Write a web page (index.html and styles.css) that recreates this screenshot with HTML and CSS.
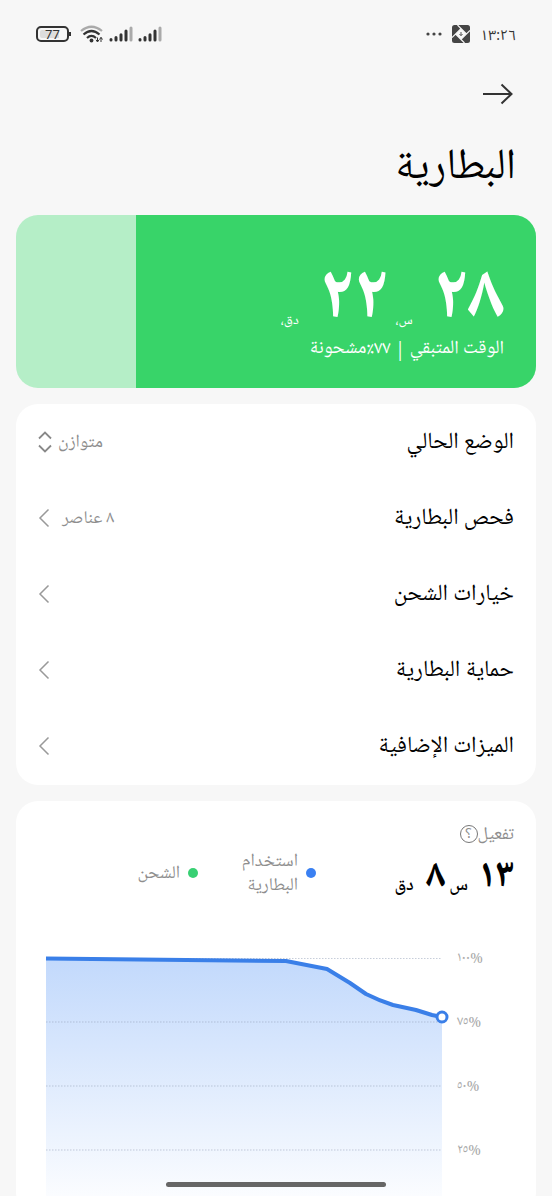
FILE: index.html
```
<!DOCTYPE html>
<html lang="ar" dir="rtl">
<head>
<meta charset="utf-8">
<meta name="viewport" content="width=device-width, initial-scale=1">
<title>البطارية</title>
<link rel="stylesheet" href="styles.css">
</head>
<body>
<div class="screen">
  <header class="status">
    <div class="status-group">
      <time class="clock">١٣:٢٦</time>
      <svg class="app-icon" viewBox="0 0 18 18" aria-hidden="true">
        <rect width="18" height="18" rx="2.5" fill="#454545"/>
        <path d="M9 3.6L14.4 9L9 14.4L3.6 9Z" fill="#f7f7f7"/>
        <path d="M5.500 0L14.4 9M18 5.500L9 14.4M12.500 18L3.6 9M0 12.500L9 3.6" stroke="#f7f7f7" stroke-width="1.2"/>
        <path d="M9 7V10M7.500 9L9 10.800L10.500 9" stroke="#555" stroke-width="1" fill="none"/>
      </svg>
      <svg class="dots" viewBox="0 0 16 4" aria-hidden="true"><g fill="#444"><circle cx="2" cy="2" r="1.6"/><circle cx="8" cy="2" r="1.6"/><circle cx="14" cy="2" r="1.6"/></g></svg>
    </div>
    <div class="status-group status-system">
      <svg class="signal" viewBox="0 0 24 16" aria-hidden="true"><g stroke="#333" stroke-width="3" stroke-linecap="round"><path d="M2 14V13.4M7 14V11.5M12 14V8.7M17 14V5"/><path d="M22 14V2" stroke="#aaa"/></g></svg>
      <svg class="signal" viewBox="0 0 24 16" aria-hidden="true"><g stroke="#333" stroke-width="3" stroke-linecap="round"><path d="M2 14V13.4M7 14V11.5M12 14V8.7M17 14V5"/><path d="M22 14V2" stroke="#aaa"/></g></svg>
      <svg class="wifi" viewBox="0 0 24 18" aria-hidden="true">
        <g fill="none" stroke="#333" stroke-width="2.2"><path d="M1 6Q11.500 -2.500 22 6" stroke="#aaa"/><path d="M3.500 9.500Q11.500 2.500 19.500 9.500"/><path d="M7 13Q11.500 8.800 16 13"/></g>
        <circle cx="11.500" cy="15.500" r="1.900" fill="#333"/>
        <path d="M17.500 12.500V16.500M16 14.800L17.500 17L19 14.800M21 17V12.500M19.500 14.500L21 12.300L22.500 14.500" stroke="#333" fill="none"/>
      </svg>
      <span class="battery"><span class="battery-level">77</span></span>
    </div>
  </header>

  <nav class="topbar">
    <a class="back" href="#" aria-label="رجوع">
      <svg viewBox="0 0 32 22" aria-hidden="true"><path d="M1 11H29M19.500 1.500L29.500 11L19.500 20.500" fill="none" stroke="#333" stroke-width="2"/></svg>
    </a>
  </nav>
  <h1 class="title">البطارية</h1>

  <main class="content">
    <section class="hero">
      <div class="hero-charge" style="width:77%"></div>
      <p class="hero-time"><strong>٢٨</strong><small>س،</small><strong>٢٢</strong><small>دق،</small></p>
      <p class="hero-note">الوقت المتبقي | ٧٧٪مشحونة</p>
    </section>

    <section class="card options">
      <div class="row">
        <label class="row-label" for="mode">الوضع الحالي</label>
        <span class="row-end">
          <select class="mode" id="mode"><option>متوازن</option></select>
          <svg class="updown" viewBox="0 0 14 22" aria-hidden="true"><path d="M1 7.500L7 1.500L13 7.500M1 14.500L7 20.500L13 14.500" fill="none" stroke="#888" stroke-width="1.800"/></svg>
        </span>
      </div>
      <a class="row" href="#"><span class="row-label">فحص البطارية</span><span class="row-end"><span class="count">٨ عناصر</span><svg class="chevron" viewBox="0 0 12 20" aria-hidden="true"><path d="M10.500 1.500L2 10L10.500 18.500"/></svg></span></a>
      <a class="row" href="#"><span class="row-label">خيارات الشحن</span><span class="row-end"><svg class="chevron" viewBox="0 0 12 20" aria-hidden="true"><path d="M10.500 1.500L2 10L10.500 18.500"/></svg></span></a>
      <a class="row" href="#"><span class="row-label">حماية البطارية</span><span class="row-end"><svg class="chevron" viewBox="0 0 12 20" aria-hidden="true"><path d="M10.500 1.500L2 10L10.500 18.500"/></svg></span></a>
      <a class="row" href="#"><span class="row-label">الميزات الإضافية</span><span class="row-end"><svg class="chevron" viewBox="0 0 12 20" aria-hidden="true"><path d="M10.500 1.500L2 10L10.500 18.500"/></svg></span></a>
    </section>

    <section class="card usage">
      <div class="usage-head">
        <span>تفعيل</span><button class="help" type="button" aria-label="مساعدة">؟</button>
      </div>
      <div class="usage-summary">
        <p class="usage-time"><strong>١٣</strong><small>س</small><strong>٨</strong><small>دق</small></p>
        <ul class="legend">
          <li class="legend-use"><i class="dot dot-blue"></i><span>استخدام البطارية</span></li>
          <li><i class="dot dot-green"></i><span>الشحن</span></li>
        </ul>
      </div>
      <div class="chart" dir="ltr">
        <div class="plot">
          <svg class="plot-svg" viewBox="0 0 396 256" preserveAspectRatio="none" role="img" aria-label="مستوى البطارية">
            <defs><linearGradient id="fill" x1="0" y1="0" x2="0" y2="1"><stop offset="0" stop-color="#c2d9fc"/><stop offset="1" stop-color="#ffffff"/></linearGradient></defs>
            <path fill="url(#fill)" d="M0 0.500L240 3L281 11L304 25L320 36Q334 43 347 47L370 52L386 57L396 59V256H0Z"/>
            <path d="M0 0.500H396M0 64H396M0 128H396M0 192H396" stroke="#8f9db5" stroke-opacity="0.500" stroke-dasharray="1.500 1.500" fill="none"/>
            <path d="M0 0.500L240 3L281 11L304 25L320 36Q334 43 347 47L370 52L386 57L396 59" fill="none" stroke="#3a7fe8" stroke-width="4" stroke-linejoin="round"/>
          </svg>
          <span class="marker"></span>
        </div>
        <div class="axis"><span>١٠٠%</span><span>٧٥%</span><span>٥٠%</span><span>٢٥%</span></div>
      </div>
    </section>
  </main>
  <div class="home-bar"></div>
</div>
</body>
</html>
```
FILE: styles.css
```
* { box-sizing: border-box; }
body, h1, p, ul { margin: 0; padding: 0; }
body {
  background: #f7f7f7;
  color: #000;
  font-family: "Noto Naskh Arabic UI", "Noto Naskh Arabic", "Noto Sans Arabic", Roboto, "DejaVu Sans", sans-serif;
}
a { color: inherit; text-decoration: none; }
svg { display: block; flex: none; }
.screen { position: relative; height: 100vh; overflow: hidden; }

.status { display: flex; justify-content: space-between; align-items: center; height: 68px; padding: 0 36px; }
.status-group { display: flex; align-items: center; gap: 10px; }
.status-system { gap: 5px; }
.clock { padding-top: 4px; font-family: "Noto Sans Arabic", "Noto Sans", sans-serif; font-size: 14px; line-height: 24px; color: #333; }
.app-icon { width: 18px; height: 18px; }
.dots { width: 16px; height: 4px; }
.signal { width: 24px; height: 16px; }
.wifi { width: 24px; height: 18px; }
.battery { position: relative; width: 33px; height: 16px; margin-right: 6px; padding: 2px; border: 2px solid #333; border-radius: 5px; }
.battery::after { content: ""; position: absolute; top: 4px; right: -4px; width: 2px; height: 4px; background: #333; }
.battery-level { display: block; background: linear-gradient(90deg, #ddd 77%, transparent 77%); color: #333; font: 13px/8px "Noto Sans", sans-serif; text-align: center; border-radius: 2px; }

.topbar { display: flex; height: 52px; align-items: center; padding: 0 38px; }
.back svg { width: 32px; height: 22px; }
.title { height: 95px; padding: 16px 36px 0; font-size: 43px; line-height: 64px; font-weight: 400; }

.content { display: flex; flex-direction: column; gap: 16px; padding: 0 16px; }
.hero { position: relative; height: 173px; padding: 38px 32px 0; border-radius: 22px; overflow: hidden; background: #b5eec7; color: #fff; }
.hero-charge { position: absolute; inset: 0 0 0 auto; background: #38d469; }
.hero-time { position: relative; display: flex; align-items: flex-end; height: 80px; }
.hero-time strong { font-size: 76px; line-height: 70px; font-weight: 700; }
.hero-time small { font-size: 14px; line-height: 24px; padding: 0 20px 0 8px; }
.hero-note { position: relative; font-size: 19px; line-height: 32px; }

.card { background: #fff; border-radius: 22px; }
.options { padding-bottom: 1px; }
.row { display: flex; justify-content: space-between; align-items: center; height: 76px; padding: 0 22px; }
.row-label { font-size: 23px; line-height: 32px; }
.row-end { display: flex; align-items: center; gap: 12px; color: #8e8e8e; font-size: 18px; }
.mode { appearance: none; border: 0; padding: 0; margin: 0 0 0 -6px; background: none; color: inherit; font: inherit; }
.updown { width: 14px; height: 22px; }
.chevron { width: 12px; height: 20px; fill: none; stroke: #999; stroke-width: 1.5; }

.usage { padding: 20px 22px 0; }
.usage-head { display: flex; align-items: center; height: 26px; font-size: 18px; line-height: 26px; color: #8e8e8e; }
.help { width: 18px; height: 18px; padding: 0; border: 1px solid #777; border-radius: 50%; background: none; color: inherit; font: 14px/16px "Noto Sans Arabic", "DejaVu Sans", sans-serif; }
.usage-summary { display: flex; align-items: center; height: 52px; }
.usage-time { display: flex; align-items: baseline; width: 198px; padding-top: 8px; }
.usage-time strong { font-size: 40px; line-height: 48px; }
.usage-time small { font-size: 18px; line-height: 24px; font-weight: 600; padding: 0 12px 0 4px; }
.legend { display: flex; align-items: center; gap: 40px; list-style: none; color: #8e8e8e; font-size: 18px; line-height: 24px; }
.legend li { display: flex; align-items: center; gap: 8px; }
.legend-use span { width: 60px; }
.dot { flex: none; width: 10px; height: 10px; border-radius: 50%; }
.dot-blue { background: #3a80f2; }
.dot-green { background: #38d073; }
.chart { display: flex; gap: 15px; margin-top: 59px; padding-left: 8px; }
.plot { position: relative; flex: 1; height: 256px; }
.plot-svg { width: 100%; height: 100%; overflow: visible; }
.marker { position: absolute; left: 100%; top: 23%; width: 13px; height: 13px; border: 3px solid #3a7fe8; border-radius: 50%; background: #fff; transform: translate(-50%, -50%); }
.axis { width: 57px; margin-top: -12px; font-size: 14px; line-height: 24px; color: #aaa; }
.axis span { display: block; height: 64px; }
.home-bar { position: absolute; left: 30%; right: 30%; bottom: 9px; height: 5px; border-radius: 3px; background: #666; }
```
